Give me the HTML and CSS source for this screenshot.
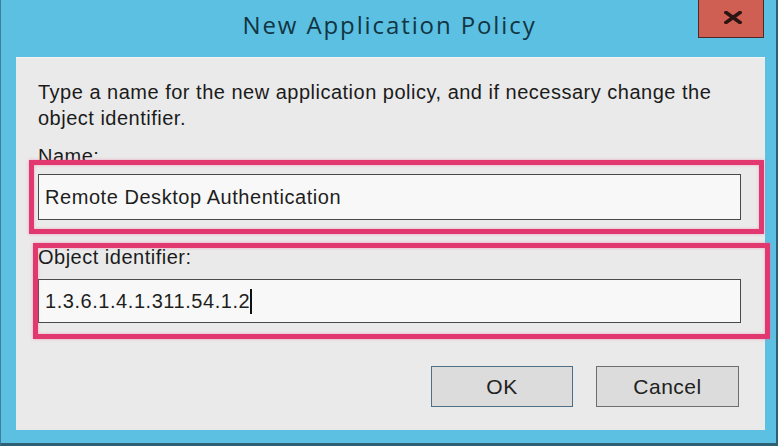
FILE: index.html
```html
<!DOCTYPE html>
<html>
<head>
<meta charset="utf-8">
<link rel="stylesheet" href="styles.css">
</head>
<body>
<div class="window">
  <div class="titlebar">
    <div class="title">New Application Policy</div>
    <div class="close">
      <svg width="18" height="13" viewBox="0 0 18 13"><path d="M2 1.5 L16 11.5 M16 1.5 L2 11.5" stroke="#2a1414" stroke-width="3.6" stroke-linecap="square"/></svg>
    </div>
  </div>
  <div class="panel">
    <p class="intro">Type a name for the new application policy, and if necessary change the object identifier.</p>
    <div class="label label-name">Name:</div>
    <div class="field field-name">Remote Desktop Authentication</div>
    <div class="label label-oid">Object identifier:</div>
    <div class="field field-oid">1.3.6.1.4.1.311.54.1.2<span class="caret"></span></div>
    <div class="buttons">
      <div class="btn btn-default">OK</div>
      <div class="btn">Cancel</div>
    </div>
    <div class="mark mark-name"></div>
    <div class="mark mark-oid"></div>
  </div>
</div>
</body>
</html>
```

FILE: styles.css
```css
html, body {
  margin: 0;
  padding: 0;
  background: #5bbfe0;
}
.window {
  width: 778px;
  height: 446px;
  box-sizing: border-box;
  background: #5cc0e2;
  border-left: 1px solid #3f7f96;
  border-right: 2px solid #2f5f73;
  border-bottom: 3px solid #2f5f73;
  display: flex;
  flex-direction: column;
}
.titlebar {
  position: relative;
  height: 57px;
  flex: none;
}
.title {
  font-family: "Open Sans", "Noto Sans", sans-serif;
  font-size: 24px;
  letter-spacing: 1.9px;
  line-height: 30px;
  padding-top: 10px;
  text-align: center;
  color: #123543;
  padding-left: 2px;
}
.close {
  position: absolute;
  top: -1px;
  left: 697px;
  width: 66px;
  height: 39px;
  box-sizing: border-box;
  background: #cf5f52;
  border: 1px solid #4b2a2a;
  display: flex;
  align-items: center;
  justify-content: center;
  padding-left: 4px;
  padding-bottom: 2px;
}
.panel {
  position: relative;
  margin-left: 15px;
  width: 749px;
  height: 373px;
  box-sizing: border-box;
  background: #eaeaea;
  border-top: 1px solid #f4f4f4;
  padding: 21px 24px 0 22px;
  font-family: "Liberation Sans", Arial, sans-serif;
  color: #1b1b1b;
  letter-spacing: 0.5px;
}
.intro {
  margin: 0;
  font-size: 20px;
  line-height: 26px;
  padding-right: 0;
}
.label {
  font-size: 20px;
  line-height: 26px;
}
.label-name {
  margin-top: 12px;
}
.label-oid {
  margin-top: 24px;
}
.field {
  box-sizing: border-box;
  background: #f8f8f8;
  border: 1px solid #4a4a4a;
  font-size: 20px;
  letter-spacing: 0.55px;
  display: flex;
  align-items: center;
  padding-left: 6px;
  color: #1e1e1e;
}
.field-name {
  margin-top: 5px;
  height: 46px;
}
.field-oid {
  margin-top: 9px;
  height: 44px;
}
.caret {
  display: inline-block;
  width: 2px;
  height: 25px;
  background: #111;
  margin-left: 0;
}
.buttons {
  display: flex;
  justify-content: flex-end;
  gap: 23px;
  margin-top: 43px;
  padding-right: 2px;
}
.btn {
  box-sizing: border-box;
  width: 143px;
  height: 41px;
  background: #dcdcdc;
  border: 1px solid #6e6e6e;
  display: flex;
  align-items: center;
  justify-content: center;
  font-size: 21px;
  color: #222;
}
.btn-default {
  width: 142px;
  border-color: #4f6f86;
}
.mark {
  position: absolute;
  border: 5px solid #e0386f;
  box-sizing: border-box;
  box-shadow: 0 0 3px rgba(240, 110, 150, 0.55), inset 0 0 3px rgba(240, 110, 150, 0.55);
}
.mark-name {
  left: 13px;
  top: 102px;
  width: 735px;
  height: 74px;
}
.mark-oid {
  left: 17px;
  top: 185px;
  width: 737px;
  height: 96px;
}
```
